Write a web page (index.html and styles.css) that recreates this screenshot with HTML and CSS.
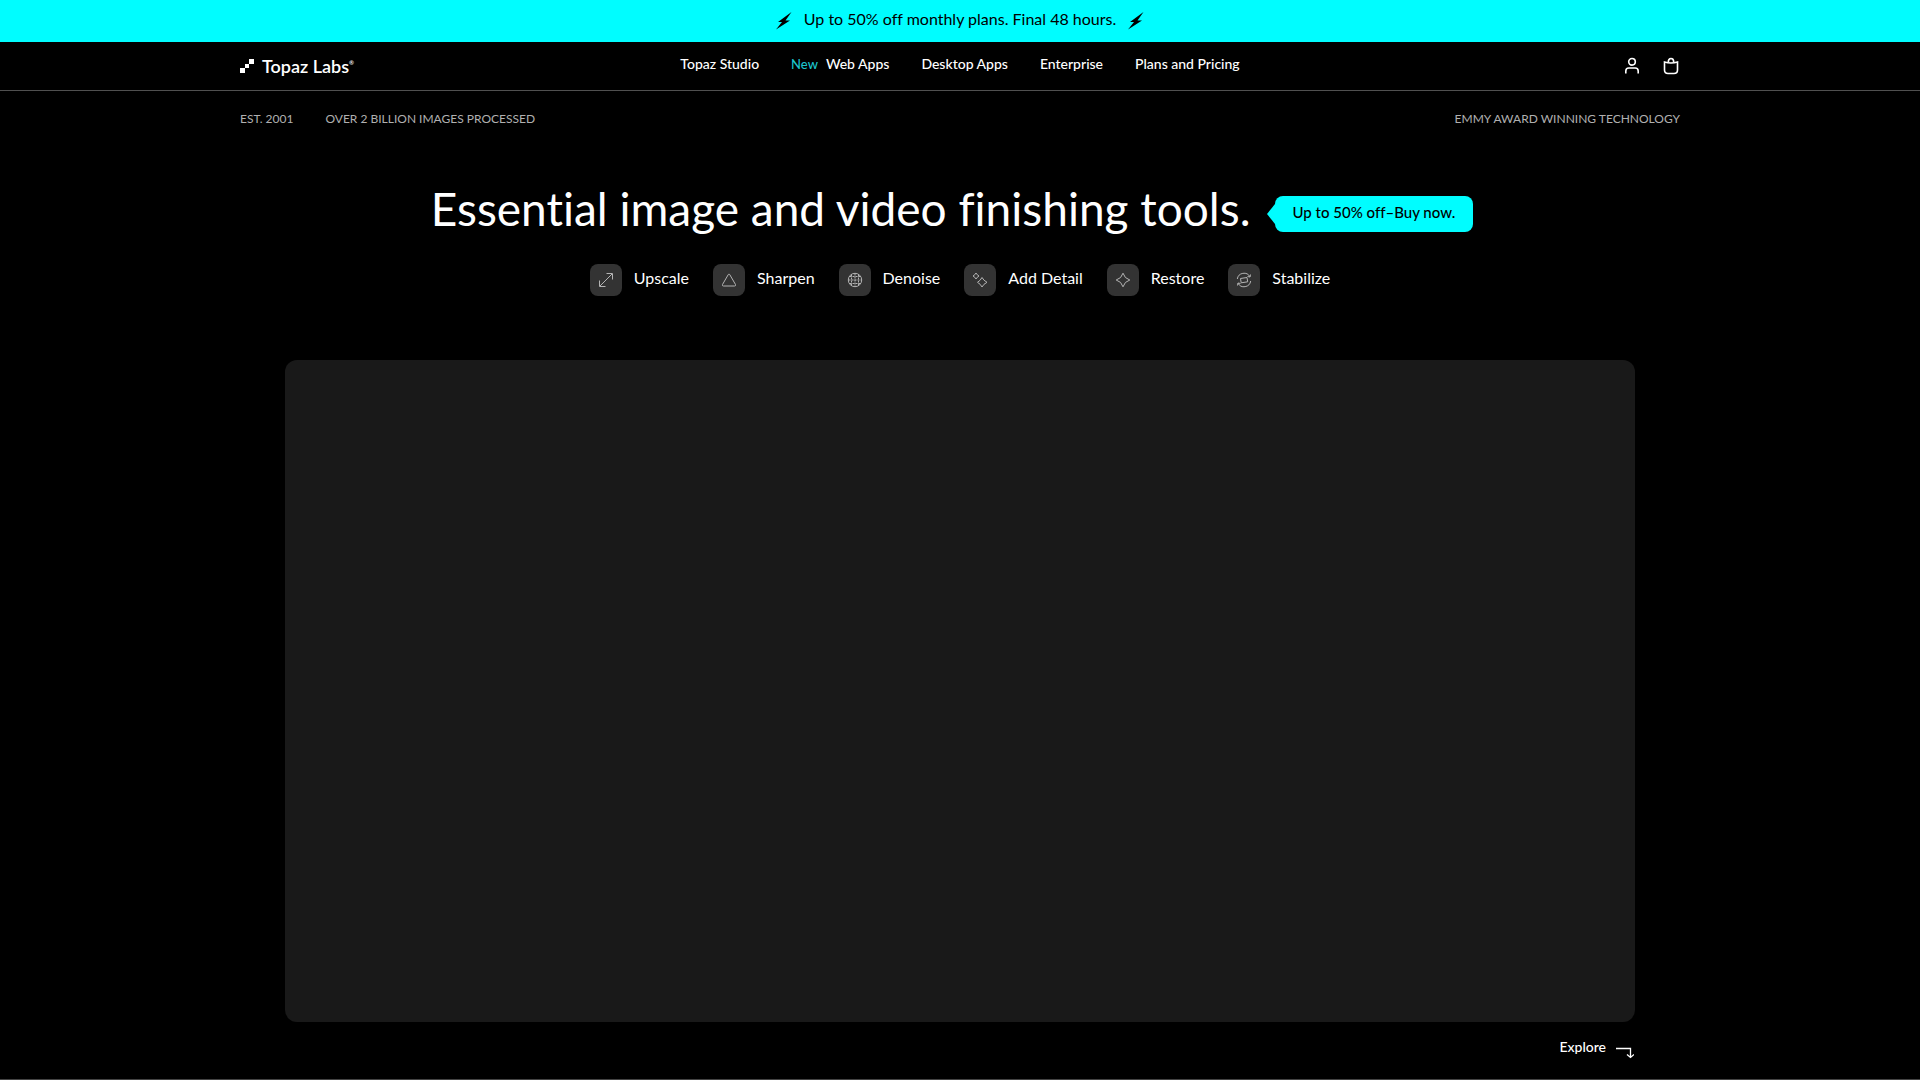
FILE: index.html
```html
<!DOCTYPE html>
<html lang="en">
<head>
<meta charset="utf-8">
<title>Topaz Labs</title>
<meta name="viewport" content="width=device-width, initial-scale=1">
<link rel="stylesheet" href="styles.css">
</head>
<body>
<div class="page">
  <a class="promo" href="#pricing">
    <svg class="bolt" viewBox="0 0 16 18" aria-hidden="true"><path d="M15.500 0 2 10h4L0 17.500l14-9H9.500z"/></svg>
    <span class="promo-text">Up to 50% off monthly plans. Final 48 hours.</span>
    <svg class="bolt" viewBox="0 0 16 18" aria-hidden="true"><path d="M15.500 0 2 10h4L0 17.500l14-9H9.500z"/></svg>
  </a>

  <header class="header">
    <div class="container header-row">
      <a class="logo" href="#home">
        <svg class="logo-mark" viewBox="0 0 14 14" aria-hidden="true"><path d="M9 0h5v5H9zM5 5h4v4H5zM0 9h5v5H0z"/></svg>
        <span class="logo-name">Topaz Labs<sup class="logo-reg">®</sup></span>
      </a>
      <nav class="nav" aria-label="Main">
        <a href="#studio">Topaz Studio</a>
        <a href="#web"><span class="nav-new">New</span>Web Apps</a>
        <a href="#desktop">Desktop Apps</a>
        <a href="#enterprise">Enterprise</a>
        <a href="#pricing">Plans and Pricing</a>
      </nav>
      <div class="actions">
        <button class="icon-button" type="button" aria-label="Account">
          <svg viewBox="0 0 16 18" aria-hidden="true"><circle cx="8" cy="4.800" r="3.300"/><path d="M1.800 16.500V14q0-3 3-3h6.400q3 0 3 3v2.500"/></svg>
        </button>
        <button class="icon-button" type="button" aria-label="Cart">
          <svg viewBox="0 0 16 18" aria-hidden="true"><path d="M1.500 5q6.500 2 13 0v8q0 3.500-3.500 3.500H5Q1.500 16.500 1.500 13zM5.300 5q0-3.500 2.700-3.500T10.700 5"/></svg>
        </button>
      </div>
    </div>
  </header>

  <main class="hero">
    <div class="container facts">
      <span>EST. 2001</span>
      <span>OVER 2 BILLION IMAGES PROCESSED</span>
      <span class="facts-end">EMMY AWARD WINNING TECHNOLOGY</span>
    </div>

    <div class="headline">
      <h1>Essential image and video finishing tools.</h1>
      <a class="offer" href="#pricing">Up to 50% off–Buy now.</a>
    </div>

    <ul class="features">
      <li><span class="tile"><svg viewBox="0 0 16 16" aria-hidden="true"><path d="M2 14 14 2M8.500 1.500h6v6M1.500 8.500v6h6"/></svg></span>Upscale</li>
      <li><span class="tile"><svg viewBox="0 0 16 16" aria-hidden="true"><path d="M7.300 2.500q.7-1 1.400 0l5.800 10q.5 1.500-1 1.500h-11q-1.500 0-1-1.500z"/></svg></span>Sharpen</li>
      <li><span class="tile"><svg viewBox="0 0 16 16" aria-hidden="true"><circle cx="8" cy="8" r="6.700"/><path stroke-dasharray="2 1" d="M4.500 2.500v11M8 1.500v13M11.500 2.500v11M2.500 4.500h11M1.500 8h13M2.500 11.500h11"/></svg></span>Denoise</li>
      <li><span class="tile"><svg viewBox="0 0 16 16" aria-hidden="true"><path d="M10 5.500Q11.500 8.500 15 10.300 11.500 12 10 15 8.500 12 5.500 10.300 8.500 8.500 10 5.500zM4 1Q5 3 7 4 5 5 4 7 3 5 1 4 3 3 4 1z"/></svg></span>Add Detail</li>
      <li><span class="tile"><svg viewBox="0 0 16 16" aria-hidden="true"><path d="M8 1.200Q9.500 6.500 14.800 8 9.500 9.500 8 14.800 6.500 9.500 1.200 8 6.500 6.500 8 1.200z"/></svg></span>Restore</li>
      <li><span class="tile"><svg viewBox="0 0 16 16" aria-hidden="true"><path d="M1.300 7A6.800 6.800 0 0 1 14 4.800M14.700 9A6.800 6.800 0 0 1 2 11.200M1.500 13.500 2 11l2.500.5M14.500 2.500 14 5l-2.500-.5"/><path d="m4.500 6.500 6.500-1 .7 4.300-6.500 1z"/></svg></span>Stabilize</li>
    </ul>

    <div class="stage">
      <div class="video"></div>
      <a class="explore" href="#explore">Explore
        <svg viewBox="0 0 18 12" aria-hidden="true"><path d="M0 1.500h14.500V10M11 7.500l3.500 3 3.500-3"/></svg>
      </a>
    </div>
  </main>
</div>
</body>
</html>
```
FILE: styles.css
```css
* { box-sizing: border-box; }

body {
  margin: 0;
  background: #000;
  color: #fff;
  font-family: Lato, "Liberation Sans", sans-serif;
  font-size: 14px;
  font-variant-ligatures: none;
  line-height: 20px;
}

a { color: inherit; text-decoration: none; }

.page {
  min-height: 100vh;
  display: flex;
  flex-direction: column;
  border-bottom: 1px solid #444;
}

.container {
  width: 75%;
  margin: 0 auto;
}

/* Promo bar */
.promo {
  display: flex;
  justify-content: center;
  align-items: center;
  gap: 12px;
  height: 42px;
  background: #00fdff;
  color: #000;
  font-size: 16px;
}
.promo-text { padding-bottom: 4px; }
.bolt { width: 16px; height: 18px; }

/* Header */
.header { border-bottom: 1px solid #505050; }
.header-row {
  height: 48px;
  display: grid;
  grid-template-columns: 1fr auto 1fr;
  align-items: center;
}
.logo { display: flex; align-items: center; gap: 8px; }
.logo-mark { width: 14px; height: 14px; fill: #fff; }
.logo-name { font-size: 18px; font-weight: 600; }
.logo-reg { font-size: 6px; line-height: 1; vertical-align: 8px; }
.nav {
  display: flex;
  gap: 32px;
  padding-bottom: 5px;
  font-weight: 500;
}
.nav-new { margin-right: 8px; color: #1cc4cc; font-size: 13px; }
.actions { display: flex; justify-content: flex-end; gap: 23px; padding-right: 1px; }
.icon-button {
  display: flex;
  padding: 0;
  border: 0;
  background: none;
}
.icon-button svg {
  width: 16px;
  height: 18px;
  fill: none;
  stroke: #fff;
  stroke-width: 1.6;
}

/* Hero */
.hero {
  flex: 1;
  display: flex;
  flex-direction: column;
}
.facts {
  display: flex;
  gap: 32px;
  padding-top: 18px;
  color: #b0b0b0;
  font-size: 12px;
}
.facts-end { margin-left: auto; }

.headline {
  display: flex;
  justify-content: center;
  align-items: center;
  gap: 24px;
  margin-top: 52px;
  padding-right: 16px;
}
h1 {
  margin: 0;
  font-size: 46px;
  font-weight: 400;
  line-height: 56px;
}
.offer {
  position: relative;
  margin-top: 10px;
  padding: 6px 18px 10px;
  border-radius: 8px;
  background: #00fdff;
  color: #000;
  font-size: 15px;
  font-weight: 500;
}
.offer::before {
  content: "";
  position: absolute;
  left: -8px;
  top: 8px;
  border: solid transparent;
  border-width: 10px 8px 10px 0;
  border-right-color: #00fdff;
}

.features {
  display: flex;
  justify-content: center;
  gap: 24px;
  margin: 27px 0 0;
  padding: 0;
  list-style: none;
  font-size: 16px;
}
.features li { display: flex; gap: 12px; line-height: 28px; }
.tile {
  display: grid;
  place-items: center;
  width: 32px;
  height: 32px;
  border-radius: 8px;
  background: #333;
}
.tile svg {
  width: 16px;
  height: 16px;
  fill: none;
  stroke: #b4b4b4;
}

.stage {
  flex: 1;
  display: flex;
  flex-direction: column;
  width: 75%;
  margin: 64px auto 0;
  padding: 0 45px;
}
.video {
  flex: 1;
  border-radius: 12px;
  background: #191919;
}
.explore {
  display: flex;
  align-self: flex-end;
  gap: 10px;
  padding: 15px 1px 20px 0;
  font-weight: 500;
}
.explore svg {
  width: 18px;
  height: 12px;
  margin-top: 10px;
  fill: none;
  stroke: #fff;
  stroke-width: 1.3;
}
```
